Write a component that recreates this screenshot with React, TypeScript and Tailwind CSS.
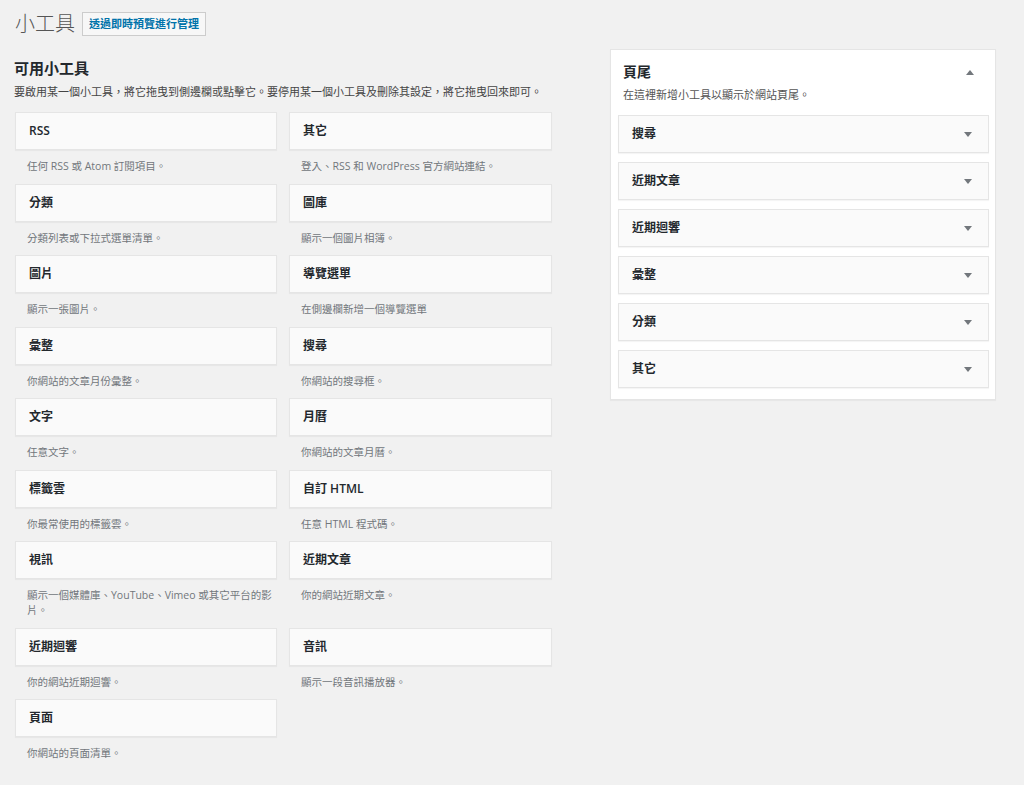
const font = { fontFamily: '"Open Sans", "Noto Sans CJK TC", sans-serif' };

type Widget = { name: string; desc: string };

const widgets: Widget[] = [
  { name: "RSS", desc: "任何 RSS 或 Atom 訂閱項目。" },
  { name: "其它", desc: "登入、RSS 和 WordPress 官方網站連結。" },
  { name: "分類", desc: "分類列表或下拉式選單清單。" },
  { name: "圖庫", desc: "顯示一個圖片相簿。" },
  { name: "圖片", desc: "顯示一張圖片。" },
  { name: "導覽選單", desc: "在側邊欄新增一個導覽選單" },
  { name: "彙整", desc: "你網站的文章月份彙整。" },
  { name: "搜尋", desc: "你網站的搜尋框。" },
  { name: "文字", desc: "任意文字。" },
  { name: "月曆", desc: "你網站的文章月曆。" },
  { name: "標籤雲", desc: "你最常使用的標籤雲。" },
  { name: "自訂 HTML", desc: "任意 HTML 程式碼。" },
  { name: "視訊", desc: "顯示一個媒體庫、YouTube、Vimeo 或其它平台的影片。" },
  { name: "近期文章", desc: "你的網站近期文章。" },
  { name: "近期迴響", desc: "你的網站近期迴響。" },
  { name: "音訊", desc: "顯示一段音訊播放器。" },
  { name: "頁面", desc: "你網站的頁面清單。" },
];

const footerWidgets = ["搜尋", "近期文章", "近期迴響", "彙整", "分類", "其它"];

function Arrow({ up }: { up?: boolean }) {
  return (
    <svg width="8" height="5" viewBox="0 0 8 5" className="text-[#72777c]">
      {up ? <path d="M0 5 L4 0 L8 5 Z" fill="currentColor" /> : <path d="M0 0 L8 0 L4 5 Z" fill="currentColor" />}
    </svg>
  );
}

function WidgetCell({ w }: { w: Widget }) {
  return (
    <div>
      <div className="h-[38px] flex items-center px-[13px] bg-[#fafafa] border border-[#e5e5e5] shadow-[0_1px_1px_rgba(0,0,0,0.04)] text-[12px] font-semibold text-[#23282d]">
        {w.name}
      </div>
      <p className="pl-[12px] pt-[9px] pb-[9.5px] text-[10.5px] leading-[15px] text-[#72777c]">{w.desc}</p>
    </div>
  );
}

export default function App() {
  return (
    <div className="min-h-[785px] bg-[#f1f1f1] text-[#23282d]" style={font}>
      <div className="flex items-center gap-[7px] pl-[15px] pt-[12px]">
        <h1 className="text-[20px] leading-[24px] font-light text-[#555]">小工具</h1>
        <button className="h-[24px] px-[6px] border border-[#ccc] bg-[#f7f7f7] text-[11px] font-semibold text-[#0073aa]">
          透過即時預覽進行管理
        </button>
      </div>

      <div className="flex gap-[57px] pl-[14px]">
        <div className="w-[539px]">
          <h2 className="mt-[23px] text-[15px] leading-[19px] font-bold">可用小工具</h2>
          <p className="mt-[6px] text-[11px] leading-[16px] text-[#444]">
            要啟用某一個小工具，將它拖曳到側邊欄或點擊它。要停用某一個小工具及刪除其設定，將它拖曳回來即可。
          </p>
          <div className="mt-[12px] ml-px grid grid-cols-[262px_263px] gap-x-[12px] items-start">
            {widgets.map((w) => (
              <WidgetCell key={w.name} w={w} />
            ))}
          </div>
        </div>

        <div className="mt-[13px] w-[386px] self-start bg-white border border-[#e5e5e5] shadow-[0_1px_1px_rgba(0,0,0,0.04)] pl-[7px] pr-[6px] pb-[11px]">
          <div className="flex items-center justify-between pl-[5px] pr-[15px] pt-[12px]">
            <h3 className="text-[14px] leading-[20px] font-semibold">頁尾</h3>
            <Arrow up />
          </div>
          <p className="pl-[5px] mt-[5px] text-[11px] leading-[16px] text-[#555]">在這裡新增小工具以顯示於網站頁尾。</p>
          <div className="mt-[12px] flex flex-col gap-[9px]">
            {footerWidgets.map((n) => (
              <div
                key={n}
                className="h-[38px] flex items-center justify-between pl-[13px] pr-[16px] bg-[#fafafa] border border-[#e5e5e5] shadow-[0_1px_1px_rgba(0,0,0,0.04)] text-[12px] font-semibold"
              >
                <span>{n}</span>
                <Arrow />
              </div>
            ))}
          </div>
        </div>
      </div>
    </div>
  );
}
